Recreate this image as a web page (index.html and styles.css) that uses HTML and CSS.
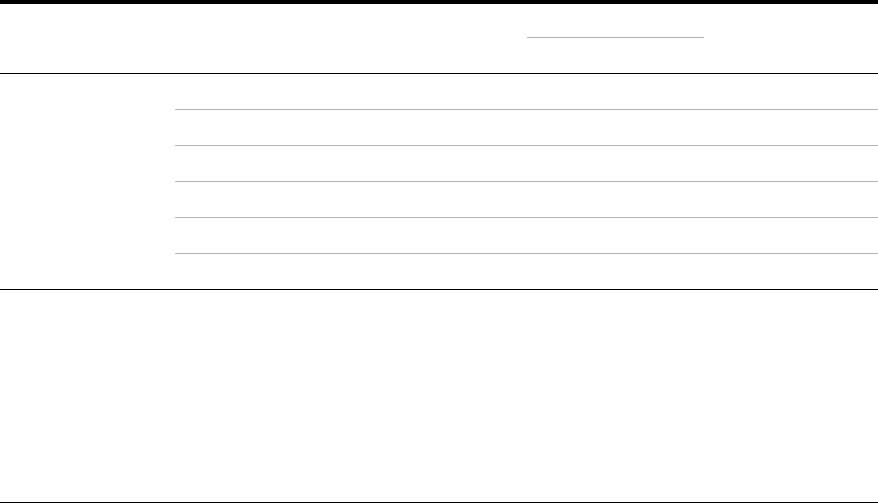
FILE: index.html
```html
<!DOCTYPE html>
<html lang="en">
<head>
<meta charset="utf-8">
<title>Table</title>
<link rel="stylesheet" href="styles.css">
</head>
<body>
<header class="header">
  <div class="search"></div>
</header>
<section class="group">
  <div class="group-label"></div>
  <div class="rows">
    <div class="row"></div>
    <div class="row"></div>
    <div class="row"></div>
    <div class="row"></div>
    <div class="row"></div>
    <div class="row"></div>
  </div>
</section>
<section class="footer-block"></section>
</body>
</html>
```

FILE: styles.css
```css
html, body {
  margin: 0;
  padding: 0;
  background: #ffffff;
  font-family: "Liberation Sans", Arial, sans-serif;
}
.header {
  border-top: 4px solid #000;
  border-bottom: 1px solid #000;
  height: 69px;
  display: flex;
  align-items: flex-start;
  padding-left: 527px;
}
.search {
  margin-top: 33px;
  width: 177px;
  height: 0;
  border-bottom: 1px solid #b0b0b0;
}
.group {
  display: flex;
  border-bottom: 1px solid #000;
}
.group-label {
  width: 175px;
  flex: none;
}
.rows {
  flex: 1;
  display: flex;
  flex-direction: column;
}
.row {
  height: 35px;
  border-bottom: 1px solid #b4b4b4;
}
.row:last-child {
  border-bottom: none;
}
.footer-block {
  height: 212px;
  border-bottom: 1px solid #000;
}
```
